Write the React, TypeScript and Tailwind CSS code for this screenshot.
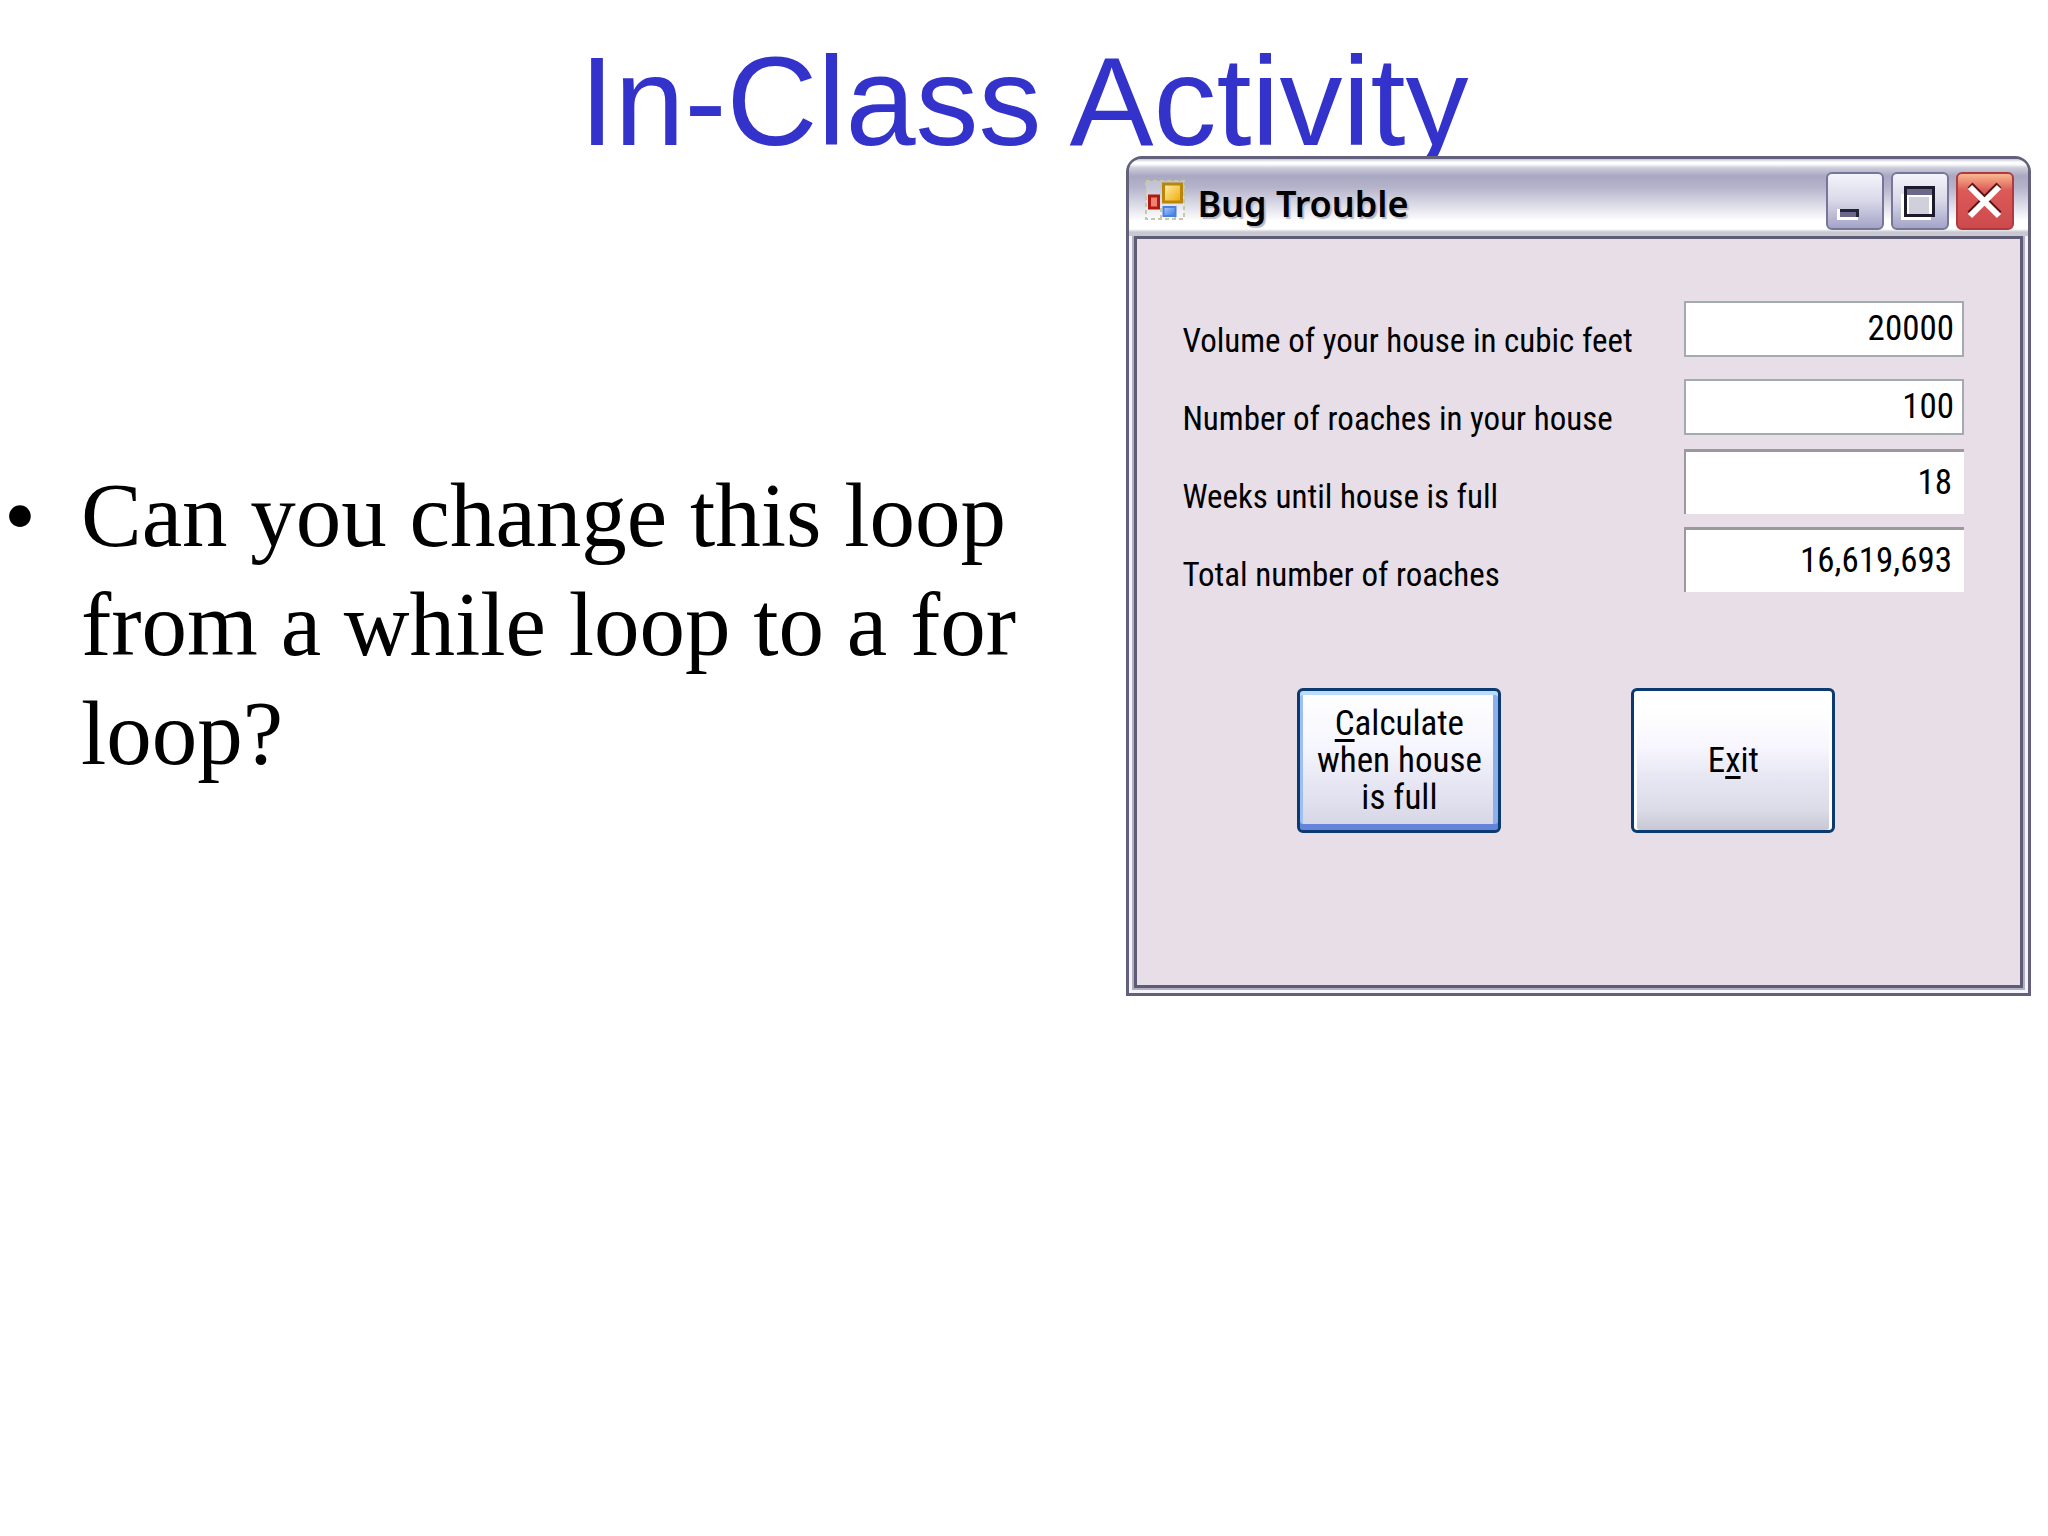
import { useState } from "react"
import type { ReactNode } from "react"

const WEEKLY_GROWTH = 1.95
const ROACH_VOLUME = 0.002

function FormIcon() {
  return (
    <svg className="h-10 w-10 shrink-0" viewBox="0 0 40 40" aria-hidden="true">
      <defs>
        <linearGradient id="gold" x1="0" y1="0" x2="1" y2="1">
          <stop offset="0" stopColor="#fff0b0" />
          <stop offset="1" stopColor="#f0a800" />
        </linearGradient>
        <linearGradient id="blue" x1="0" y1="0" x2="1" y2="1">
          <stop offset="0" stopColor="#a8ccff" />
          <stop offset="1" stopColor="#3a78e0" />
        </linearGradient>
      </defs>
      <g fill="#ffffff" fillOpacity="0.25" stroke="#c6c9a4" strokeWidth="2" strokeDasharray="4 3">
        <rect x="1" y="1" width="38" height="38" />
        <path d="M16 28v11M30 28v11" />
      </g>
      <rect x="18.5" y="4" width="18" height="18" fill="url(#gold)" stroke="#b8860b" strokeWidth="3" />
      <rect x="4.5" y="16" width="9" height="12" fill="#f08070" stroke="#b01a10" strokeWidth="3" />
      <rect x="18.5" y="27" width="12" height="9" fill="url(#blue)" stroke="#4a80d8" strokeWidth="2" />
    </svg>
  )
}

function MinimizeIcon() {
  return (
    <svg className="h-full w-full" viewBox="0 0 54 54" shapeRendering="crispEdges" aria-hidden="true">
      <rect x="9" y="35" width="21" height="11" fill="#fff" />
      <rect x="12" y="35" width="19" height="8" fill="#24223a" />
      <rect x="12" y="38" width="16" height="5" fill="#6a6788" />
    </svg>
  )
}

function MaximizeIcon() {
  return (
    <svg className="h-full w-full" viewBox="0 0 54 54" shapeRendering="crispEdges" aria-hidden="true">
      <rect x="8" y="20" width="30" height="26" fill="#fff" />
      <rect x="11" y="12" width="31" height="31" fill="#1c1a2c" />
      <rect x="14" y="15" width="25" height="6" fill="#6a6788" />
      <rect x="14" y="21" width="25" height="19" fill="#fff" />
      <rect x="16" y="23" width="20" height="17" fill="#d0d0dc" />
    </svg>
  )
}

function CloseIcon() {
  return (
    <svg className="h-full w-full" viewBox="0 0 54 54" aria-hidden="true">
      <path d="M12 11L41 40M41 11L12 40" stroke="#5a1414" strokeWidth="7" />
      <path d="M12 13L41 42M41 13L12 42" stroke="#fff" strokeWidth="6" />
    </svg>
  )
}

function CaptionButton({ label, className, children }: { label: string; className: string; children: ReactNode }) {
  return (
    <button type="button" aria-label={label} className={`h-[58px] w-[58px] rounded-md border-2 ${className}`}>
      {children}
    </button>
  )
}

const inputClass =
  "mt-[11px] h-14 w-[280px] border-2 border-[#a3abb0] bg-white pr-2 pb-[2px] text-right text-[35px] outline-none"
const outputClass =
  "mt-[3px] flex h-[65px] w-[280px] items-center justify-end border-t-3 border-l-2 border-[#9c989e] bg-white pr-3 text-[35px]"
const labelClass = "pt-[30px] text-[33px] leading-[42px] whitespace-nowrap"
const rowClass = "flex h-[78px] items-start justify-between"

function BugTroubleWindow() {
  const [volume, setVolume] = useState("20000")
  const [roaches, setRoaches] = useState("100")
  const [weeks, setWeeks] = useState(18)
  const [total, setTotal] = useState(16619693)

  const calculate = () => {
    const start = Number(roaches)
    const limit = Number(volume)
    if (!(start > 0) || !(limit > 0)) return
    let count = start
    let week = 0
    while (count * ROACH_VOLUME < limit) {
      count = count * WEEKLY_GROWTH
      week++
    }
    setWeeks(week)
    setTotal(Math.round(count))
  }

  return (
    <section className="relative rounded-t-2xl border-3 border-[#62607a] bg-[#f4f4fa] font-['Roboto_Condensed',Roboto,'Liberation_Sans',sans-serif] text-black">
      <header className="flex h-[77px] items-start rounded-t-xl bg-[linear-gradient(to_bottom,#c4c4d4_0px,#ffffff_3px,#ffffff_5px,#ccccda_9px,#a9a8c2_17px,#b4b3ca_28px,#dcdce8_46px,#ffffff_62px,#ffffff_70px,#c8c8d0_73px,#c8c8d0_77px)] pt-[13px] pr-[14px] pl-4">
        <div className="flex flex-1 items-center gap-3 pt-1">
          <FormIcon />
          <h2 className="pt-2 font-['Noto_Sans',sans-serif] text-[36px] leading-10 font-semibold [text-shadow:2px_2px_1px_#b8b8c8]">
            Bug Trouble
          </h2>
        </div>
        <div className="flex gap-[7px]">
          <CaptionButton label="Minimize" className="border-[#77769a] bg-linear-to-b from-[#f4f4fc] via-[#d8d8e8] to-[#a4a4c8]">
            <MinimizeIcon />
          </CaptionButton>
          <CaptionButton label="Maximize" className="border-[#77769a] bg-linear-to-b from-[#f4f4fc] via-[#d8d8e8] to-[#a4a4c8]">
            <MaximizeIcon />
          </CaptionButton>
          <CaptionButton label="Close" className="border-[#b03a40] bg-linear-to-b from-[#f8b890] via-[#dc5a58] via-30% to-[#cc4a4c]">
            <CloseIcon />
          </CaptionButton>
        </div>
      </header>

      <div className="mx-[3px] mb-[3px] border-x-2 border-b-2 border-[#b0afc6]">
        <div className="border-3 border-[#5e5c74] bg-[#e7dee7] pt-[51px] pr-[56px] pb-[152px] pl-[45px]">
          <div className={rowClass}>
            <label htmlFor="volume" className={labelClass}>
              Volume of your house in cubic feet
            </label>
            <input id="volume" className={inputClass} value={volume} onChange={(e) => setVolume(e.target.value)} />
          </div>
          <div className={rowClass}>
            <label htmlFor="roaches" className={labelClass}>
              Number of roaches in your house
            </label>
            <input id="roaches" className={inputClass} value={roaches} onChange={(e) => setRoaches(e.target.value)} />
          </div>
          <div className={rowClass}>
            <label htmlFor="weeks" className={labelClass}>
              Weeks until house is full
            </label>
            <output id="weeks" className={outputClass}>
              {weeks}
            </output>
          </div>
          <div className={rowClass}>
            <label htmlFor="total" className={labelClass}>
              Total number of roaches
            </label>
            <output id="total" className={outputClass}>
              {total.toLocaleString("en-US")}
            </output>
          </div>

          <div className="mt-[86px] flex gap-[130px] pl-[115px] text-[35px] leading-[37px]">
            <button
              type="button"
              onClick={calculate}
              className="h-[145px] w-[204px] rounded-md border-3 border-[#0a3a70] bg-[linear-gradient(to_bottom,#ffffff,#f6f6fe_40%,#e2e2f0_75%,#d4d4e4)] px-2 shadow-[inset_0_4px_0_#bcdcfc,inset_0_-6px_0_#6484dc,inset_3px_0_0_#9cc0f4,inset_-5px_0_0_#8cb0ec]"
            >
              <span className="underline decoration-3 underline-offset-4">C</span>alculate
              <br />
              when house
              <br />
              is full
            </button>
            <button
              type="button"
              className="h-[145px] w-[204px] rounded-md border-3 border-[#0a3a70] bg-[linear-gradient(to_bottom,#ffffff_12%,#f8f6fe_40%,#e8e8f4_60%,#dcdce8_85%,#c8c8d4)] shadow-[inset_3px_0_0_#ffffff,inset_-3px_0_0_#ffffff]"
            >
              E<span className="underline decoration-3 underline-offset-4">x</span>it
            </button>
          </div>
        </div>
      </div>
    </section>
  )
}

export default function App() {
  return (
    <main className="min-h-screen bg-white">
      <h1 className="h-39 pt-[39px] text-center font-['Liberation_Sans',Arial,sans-serif] text-[126px] leading-[125px] text-[#3333cc]">
        In-Class Activity
      </h1>
      <div className="grid grid-cols-[55fr_45fr] items-start">
        <ul className="pt-[305px] font-['Liberation_Serif','Times_New_Roman',serif] text-[91px] leading-[109px] text-black">
          <li className="flex">
            <span className="w-[81px] shrink-0 pl-1" aria-hidden="true">
              •
            </span>
            <span>Can you change this loop from a while loop to a for loop?</span>
          </li>
        </ul>
        <div className="pr-[17px]">
          <BugTroubleWindow />
        </div>
      </div>
    </main>
  )
}
